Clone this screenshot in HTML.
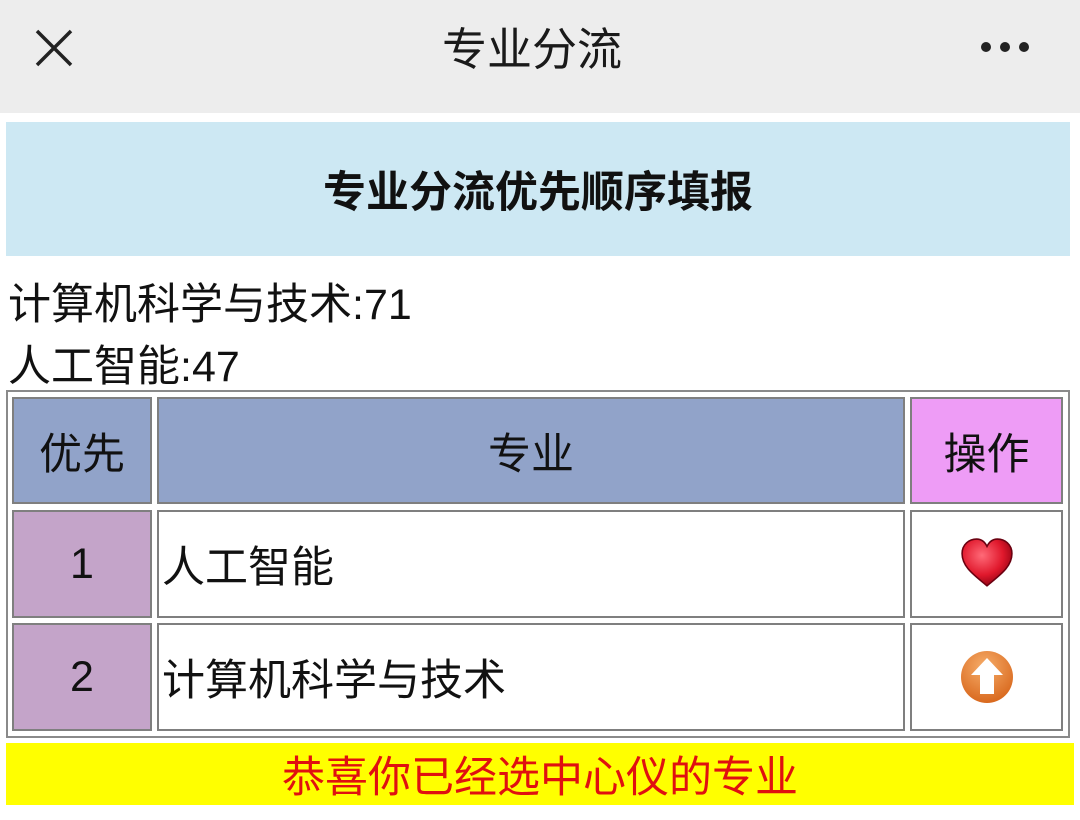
<!DOCTYPE html>
<html><head><meta charset="utf-8"><style>
*{margin:0;padding:0;box-sizing:border-box}
body{width:1080px;height:820px;background:#fff;font-family:"Liberation Sans","Noto Sans CJK SC",sans-serif;position:relative;overflow:hidden}
.a{position:absolute}
.c{position:absolute;border:2px solid #7f7f7f;display:flex;align-items:center;justify-content:center;font-size:43px;color:#111}
</style></head><body>
<div class="a" style="left:0;top:0;width:1080px;height:113px;background:#ededed"></div>
<svg class="a" style="left:34px;top:28px" width="40" height="40"><path d="M3 3L37 37M37 3L3 37" stroke="#222" stroke-width="3.5"/></svg>
<div class="a" style="left:-8px;top:22px;width:1080px;text-align:center;font-size:45px;line-height:56px;color:#1a1a1a">专业分流</div>
<svg class="a" style="left:980px;top:40px" width="52" height="14"><circle cx="6" cy="7" r="5" fill="#222"/><circle cx="25" cy="7" r="5" fill="#222"/><circle cx="44" cy="7" r="5" fill="#222"/></svg>
<div class="a" style="left:6px;top:122px;width:1064px;height:134px;background:#cde8f3;display:flex;align-items:center;justify-content:center;font-size:43px;font-weight:bold;color:#111">专业分流优先顺序填报</div>
<div class="a" style="left:8px;top:270px;font-size:43px;color:#111">计算机科学与技术:71</div>
<div class="a" style="left:8px;top:332px;font-size:43px;color:#111">人工智能:47</div>
<div class="a" style="left:6px;top:390px;width:1064px;height:348px;border:2px solid #8a8a8a"></div>
<div class="c" style="left:12px;top:397px;width:140px;height:107px;background:#91a3c9">优先</div>
<div class="c" style="left:157px;top:397px;width:748px;height:107px;background:#91a3c9">专业</div>
<div class="c" style="left:910px;top:397px;width:153px;height:107px;background:#ee9cf6">操作</div>
<div class="c" style="left:12px;top:510px;width:140px;height:108px;background:#c4a4c9">1</div>
<div class="c" style="left:157px;top:510px;width:748px;height:108px;justify-content:flex-start;padding-left:3px">人工智能</div>
<div class="c" style="left:910px;top:510px;width:153px;height:108px"><svg width="54" height="52" viewBox="0 0 52 50"><defs><radialGradient id="h" cx="0.4" cy="0.35" r="0.7"><stop offset="0" stop-color="#ff6a78"/><stop offset="0.6" stop-color="#e0182c"/><stop offset="1" stop-color="#8a0010"/></radialGradient></defs><path d="M26 46C14 36 2 28 2 15C2 6 9 1 16 1C21 1 24 4 26 8C28 4 31 1 36 1C43 1 50 6 50 15C50 28 38 36 26 46Z" fill="url(#h)" stroke="#6a0010" stroke-width="1.5"/></svg></div>
<div class="c" style="left:12px;top:623px;width:140px;height:108px;background:#c4a4c9">2</div>
<div class="c" style="left:157px;top:623px;width:748px;height:108px;justify-content:flex-start;padding-left:3px">计算机科学与技术</div>
<div class="c" style="left:910px;top:623px;width:153px;height:108px"><svg width="54" height="54" viewBox="0 0 54 54"><defs><radialGradient id="o" cx="0.45" cy="0.3" r="0.7"><stop offset="0" stop-color="#f6ad6a"/><stop offset="1" stop-color="#d9691e"/></radialGradient></defs><circle cx="27" cy="27" r="26" fill="url(#o)"/><path d="M27 8L43 25H34V44H20V25H11Z" fill="#fff"/></svg></div>
<div class="a" style="left:6px;top:743px;width:1068px;height:62px;background:#ffff00;display:flex;align-items:center;justify-content:center;font-size:43px;color:#e01010">恭喜你已经选中心仪的专业</div>
</body></html>
